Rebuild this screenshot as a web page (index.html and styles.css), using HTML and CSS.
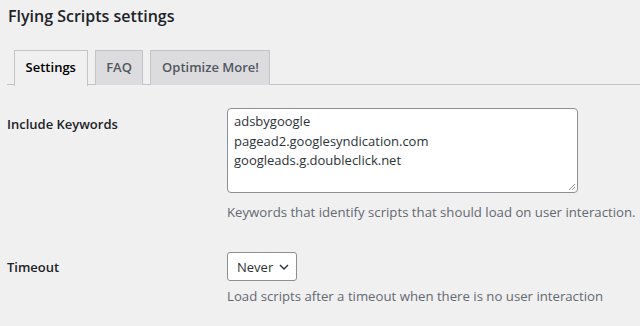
FILE: index.html
```html
<!DOCTYPE html>
<html>
<head>
<meta charset="utf-8">
<link rel="stylesheet" href="styles.css">
</head>
<body>
<div class="wrap">
  <h1 class="title">Flying Scripts settings</h1>
  <nav class="tabs">
    <span class="tab active">Settings</span>
    <span class="tab">FAQ</span>
    <span class="tab">Optimize More!</span>
  </nav>
  <div class="form">
    <div class="row">
      <div class="label">Include Keywords</div>
      <div class="field">
        <div class="textarea">adsbygoogle<br>pagead2.googlesyndication.com<br>googleads.g.doubleclick.net<svg class="grip" width="8" height="8" viewBox="0 0 8 8"><path d="M7 1L1 7M7 4L4 7" stroke="#8c8f94" stroke-width="1"/></svg></div>
        <p class="desc">Keywords that identify scripts that should load on user interaction.</p>
      </div>
    </div>
    <div class="row row-timeout">
      <div class="label">Timeout</div>
      <div class="field">
        <div class="select">Never<svg width="10" height="6" viewBox="0 0 10 6"><path d="M1 1l4 4 4-4" fill="none" stroke="#2c3338" stroke-width="1.4"/></svg></div>
        <p class="desc">Load scripts after a timeout when there is no user interaction</p>
      </div>
    </div>
  </div>
</div>
</body>
</html>
```
FILE: styles.css
```css
html, body {
  margin: 0;
  background: #f0f0f1;
  color: #1d2327;
  font-family: "Open Sans", "Noto Sans", sans-serif;
  font-size: 13px;
}
.wrap {
  padding: 0 0 0 7px;
}
.title {
  margin: 0;
  padding: 2px 0 0 1px;
  font-size: 16px;
  font-weight: 600;
  line-height: 28px;
}
.tabs {
  display: flex;
  margin-top: 20px;
  padding-left: 7px;
  border-bottom: 1px solid #c3c4c7;
  height: 35px;
  box-sizing: border-box;
}
.tab {
  display: block;
  margin-right: 7px;
  padding: 0 10.6px;
  height: 35px;
  box-sizing: border-box;
  line-height: 33px;
  background: #dcdcde;
  border: 1px solid #c3c4c7;
  border-bottom: none;
  color: #50575e;
  font-weight: 600;
  font-size: 13px;
}
.tab.active {
  background: #f0f0f1;
  color: #000;
  height: 36px;
}
.form {
  padding-top: 8px;
}
.row {
  display: grid;
  grid-template-columns: 220px 1fr;
}
.label {
  padding: 20px 0;
  font-weight: 600;
  line-height: 22px;
}
.field {
  padding: 15px 0 0;
}
.textarea {
  position: relative;
  width: 351px;
  height: 85px;
  box-sizing: border-box;
  border: 1px solid #8c8f94;
  border-radius: 4px;
  background: #fff;
  padding: 3px 6px;
  line-height: 19.5px;
  font-size: 13px;
  color: #2c3338;
}
.grip {
  position: absolute;
  right: 1px;
  bottom: 1px;
}
.desc {
  margin: 9px 0 0;
  color: #646970;
  line-height: 20px;
  font-size: 13.2px;
}
.row-timeout .field {
  padding-top: 30px;
}
.row-timeout .label {
  padding-top: 34px;
}
.row-timeout .desc {
  margin-top: 5px;
}
.select {
  display: inline-flex;
  align-items: center;
  gap: 6px;
  height: 29px;
  box-sizing: border-box;
  padding: 0 7px 0 9px;
  border: 1px solid #8c8f94;
  border-radius: 3px;
  background: #fff;
  color: #2c3338;
}
```
